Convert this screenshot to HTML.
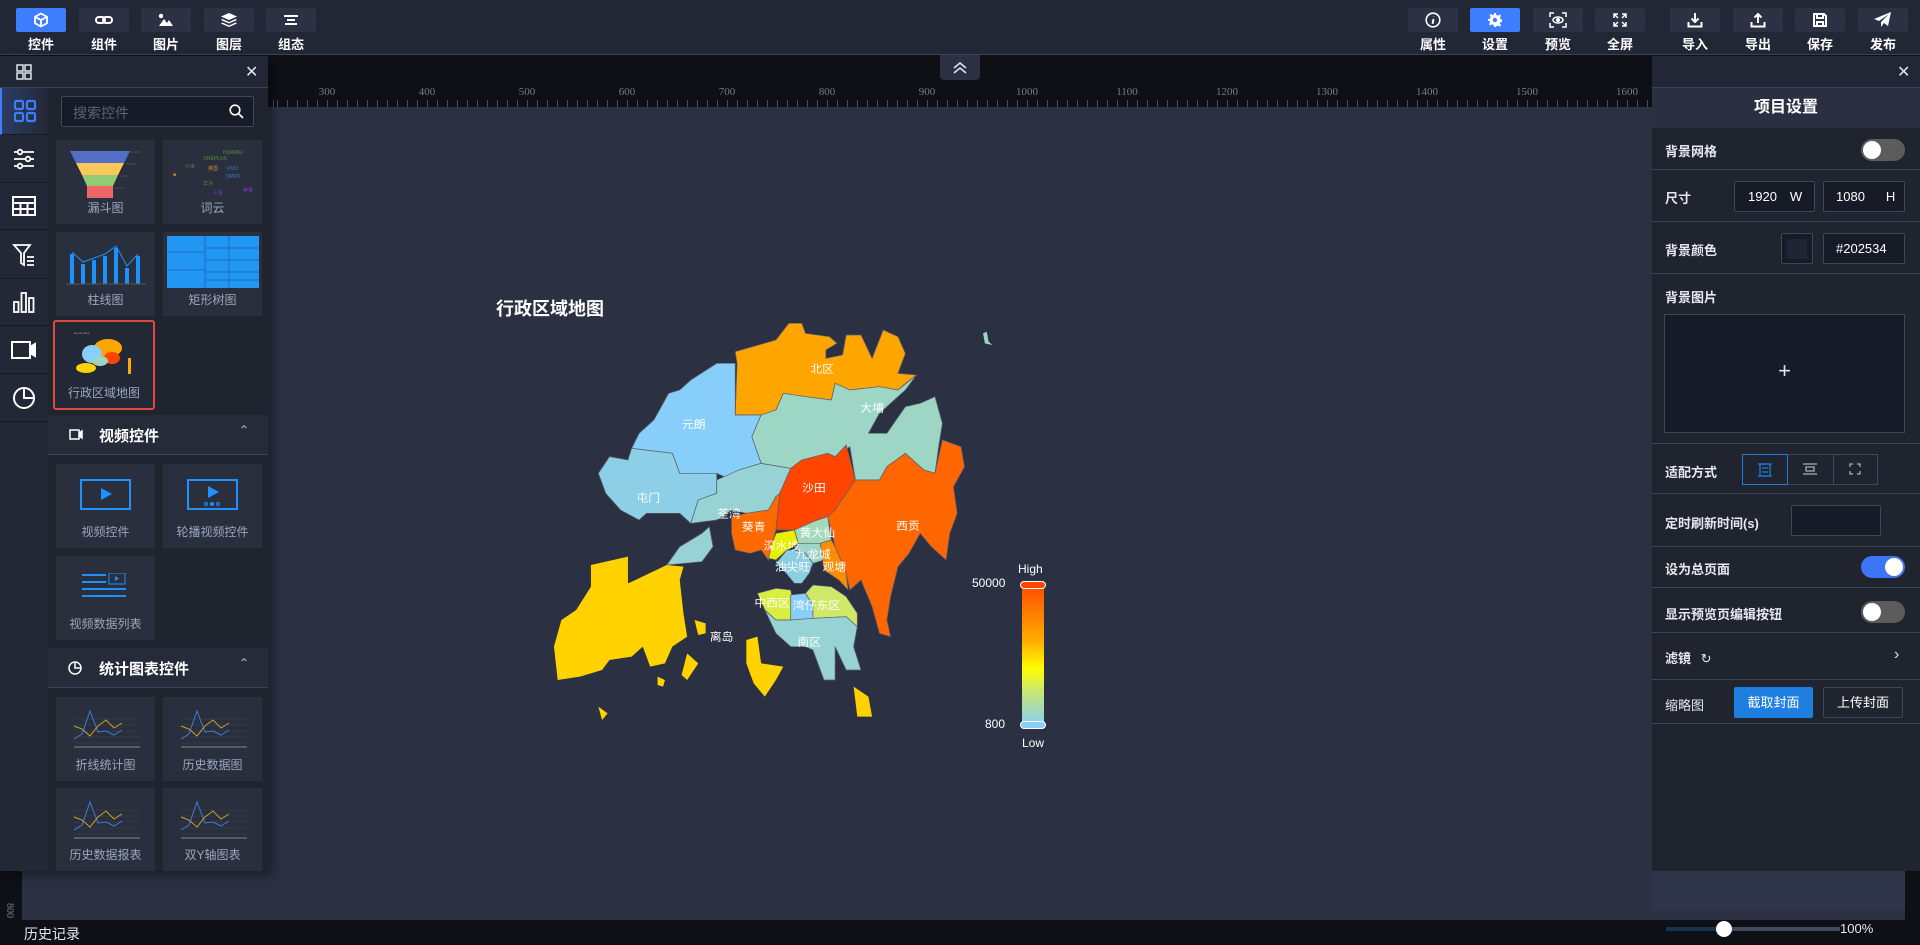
<!DOCTYPE html>
<html><head><meta charset="utf-8">
<style>
*{margin:0;padding:0;box-sizing:border-box}
body{width:1920px;height:945px;overflow:hidden;background:#0e1016;font-family:"Liberation Sans","Noto Sans CJK SC",sans-serif;position:relative;color:#fff}
.a{position:absolute}
.tb{position:absolute;top:8px;width:50px;height:24px;background:#2c3244;border-radius:2px;display:flex;align-items:center;justify-content:center}
.tb.on{background:#3d7eff}
.tl{position:absolute;top:34px;width:50px;text-align:center;font-size:13px;font-weight:bold;color:#fff}
.ic{position:absolute;left:0;width:48px;height:47px;border-bottom:1px solid #171b25;display:flex;align-items:center;justify-content:center}
.card{position:absolute;width:99px;height:84px;background:#2a2f3d}
.card .lb{position:absolute;left:0;right:0;bottom:8px;text-align:center;font-size:12px;color:#9aa7bd}
.sec{position:absolute;left:48px;width:220px;height:40px;background:#262b39;border-bottom:1px solid #3b4358;font-size:15px;font-weight:bold;color:#fff}
.row{position:absolute;left:1652px;width:268px;border-bottom:1px solid #394257}
.rl{position:absolute;left:13px;font-size:13px;font-weight:bold;color:#e6e8ee}
.inp{position:absolute;height:31px;border:1px solid #3d465b;background:#161b27;border-radius:2px;font-size:13px;color:#fff;display:flex;align-items:center}
.tg{position:absolute;left:209px;width:44px;height:22px;border-radius:11px;background:#5c5c5c}
.tg i{position:absolute;top:2px;width:18px;height:18px;border-radius:50%;background:#fff}
.rk{position:absolute;top:86px;font-family:"Liberation Serif",serif;font-size:11px;color:#777c88;transform:translateX(-50%)}
</style></head><body>

<!-- top bar -->
<div class="a" style="left:0;top:0;width:1920px;height:55px;background:#222736;border-bottom:1px solid #3a4257"></div>
<div class="tb on" style="left:16px"><svg width="16" height="16" viewBox="0 0 16 16" fill="none" stroke="#fff" stroke-width="1.8"><path d="M8 1.5 14 4.8v6.4L8 14.5 2 11.2V4.8z M2 4.8 8 8l6-3.2 M8 8v6.5"/></svg></div><div class="tl" style="left:16px">控件</div>
<div class="tb" style="left:79px"><svg width="18" height="12" viewBox="0 0 18 12" fill="none" stroke="#fff" stroke-width="2"><rect x="1" y="3" width="9" height="6" rx="3"/><rect x="8" y="3" width="9" height="6" rx="3"/></svg></div><div class="tl" style="left:79px">组件</div>
<div class="tb" style="left:141px"><svg width="16" height="14" viewBox="0 0 16 14" fill="#fff"><circle cx="3" cy="3" r="2.2"/><path d="M1 13 6 6l3 4 2-3 4 6z"/></svg></div><div class="tl" style="left:141px">图片</div>
<div class="tb" style="left:204px"><svg width="16" height="14" viewBox="0 0 16 14" fill="#fff"><path d="M8 0 16 3.5 8 7 0 3.5z"/><path d="M1.5 6 8 9l6.5-3L16 7 8 10.5 0 7z"/><path d="M1.5 9.5 8 12.5l6.5-3L16 10.5 8 14 0 10.5z"/></svg></div><div class="tl" style="left:204px">图层</div>
<div class="tb" style="left:266px"><svg width="14" height="10" viewBox="0 0 14 10" fill="#fff"><rect x="0" y="0" width="14" height="2"/><rect x="3" y="4" width="8" height="2"/><rect x="1" y="8" width="12" height="2"/></svg></div><div class="tl" style="left:266px">组态</div>

<div class="tb" style="left:1408px"><svg width="16" height="16" viewBox="0 0 16 16" fill="none" stroke="#fff" stroke-width="1.6"><circle cx="8" cy="8" r="6.8"/><path d="M8.5 7 7.6 11.8M8.8 4.2v.3" stroke-width="2"/></svg></div><div class="tl" style="left:1408px">属性</div>
<div class="tb on" style="left:1470px"><svg width="14" height="14" viewBox="0 0 14 14" fill="#fff"><path d="M6 0h2l.4 2 1.6.7 1.7-1.2 1.4 1.4-1.2 1.7.7 1.6 2 .4v2l-2 .4-.7 1.6 1.2 1.7-1.4 1.4-1.7-1.2-1.6.7L8 14H6l-.4-2-1.6-.7-1.7 1.2-1.4-1.4 1.2-1.7-.7-1.6L0 8V6l2-.4.7-1.6L1.5 2.3 2.9.9l1.7 1.2L6 1.6z"/><circle cx="7" cy="7" r="2.2" fill="#3d7eff"/></svg></div><div class="tl" style="left:1470px">设置</div>
<div class="tb" style="left:1533px"><svg width="18" height="16" viewBox="0 0 18 16" fill="none" stroke="#fff" stroke-width="1.5"><path d="M1 5V1h4M13 1h4v4M17 11v4h-4M5 15H1v-4"/><ellipse cx="9" cy="8" rx="5" ry="3"/><circle cx="9" cy="8" r="1.3" fill="#fff"/></svg></div><div class="tl" style="left:1533px">预览</div>
<div class="tb" style="left:1595px"><svg width="14" height="14" viewBox="0 0 14 14" fill="none" stroke="#fff" stroke-width="1.5"><path d="M1 5V1h4M1 1l4 4M13 5V1H9M13 1 9 5M1 9v4h4M1 13l4-4M13 9v4H9M13 13 9 9"/></svg></div><div class="tl" style="left:1595px">全屏</div>
<div class="tb" style="left:1670px"><svg width="16" height="16" viewBox="0 0 16 16" fill="none" stroke="#fff" stroke-width="2"><path d="M8 1v9M4.5 6.5 8 10l3.5-3.5M1.5 10v4.5h13V10"/></svg></div><div class="tl" style="left:1670px">导入</div>
<div class="tb" style="left:1733px"><svg width="16" height="16" viewBox="0 0 16 16" fill="none" stroke="#fff" stroke-width="2"><path d="M8 11V2M4.5 5.5 8 2l3.5 3.5M1.5 10v4.5h13V10"/></svg></div><div class="tl" style="left:1733px">导出</div>
<div class="tb" style="left:1795px"><svg width="14" height="14" viewBox="0 0 14 14" fill="none" stroke="#fff" stroke-width="2"><path d="M1 1h10l2 2v10H1z"/><path d="M4 1v4h6V1M4 13V9h6v4"/></svg></div><div class="tl" style="left:1795px">保存</div>
<div class="tb" style="left:1858px"><svg width="18" height="16" viewBox="0 0 18 16" fill="#fff"><path d="M17 0 0 7l5 2 10-7-8 8v5l3-4 4 3z"/></svg></div><div class="tl" style="left:1858px">发布</div>

<!-- canvas + rulers -->
<div class="a" style="left:22px;top:85px;width:1883px;height:835px;background:#2b3142"></div>
<div class="a" style="left:1652px;top:871px;width:253px;height:39px;background:#2e3548"></div>
<div class="a" style="left:22px;top:56px;width:1630px;height:51px;background:#0e1016"></div>
<div class="a" style="left:268px;top:100px;width:1384px;height:7px;background:repeating-linear-gradient(90deg,#474d5b 0 1px,transparent 1px 10px);background-position:9px 0"></div>
<div class="a" style="left:940px;top:55px;width:40px;height:25px;background:#2b3142;border-radius:0 0 4px 4px"><svg width="40" height="25" viewBox="0 0 40 25" fill="none" stroke="#dfe3ea" stroke-width="1.6"><path d="M14 13l6-5 6 5M14 18l6-5 6 5"/></svg></div>
<div class="rk" style="left:327px">300</div><div class="rk" style="left:427px">400</div><div class="rk" style="left:527px">500</div><div class="rk" style="left:627px">600</div><div class="rk" style="left:727px">700</div><div class="rk" style="left:827px">800</div><div class="rk" style="left:927px">900</div><div class="rk" style="left:1027px">1000</div><div class="rk" style="left:1127px">1100</div><div class="rk" style="left:1227px">1200</div><div class="rk" style="left:1327px">1300</div><div class="rk" style="left:1427px">1400</div><div class="rk" style="left:1527px">1500</div><div class="rk" style="left:1627px">1600</div>
<div class="a" style="left:0;top:871px;width:22px;height:50px;background:#0e1016"></div>
<div class="a" style="left:2px;top:905px;font-family:'Liberation Serif',serif;font-size:10px;color:#777c88;transform:rotate(90deg)">800</div>
<div class="a" style="left:0;top:920px;width:1920px;height:25px;background:#0e1016"></div>
<div class="a" style="left:24px;top:924px;font-size:14px;color:#e6e8ee">历史记录</div>
<div class="a" style="left:1666px;top:927px;width:174px;height:4px;background:#3f4a60"></div>
<div class="a" style="left:1666px;top:927px;width:58px;height:4px;background:#17334f"></div>
<div class="a" style="left:1716px;top:921px;width:16px;height:16px;border-radius:50%;background:#fff"></div>
<div class="a" style="left:1840px;top:921px;font-size:13px;color:#e6e8ee">100%</div>

<!-- map -->
<div class="a" style="left:496px;top:295px;font-size:18px;font-weight:bold;color:#fff">行政区域地图</div>
<svg class="a" style="left:480px;top:280px" width="580" height="470" viewBox="0 0 1568 1410" preserveAspectRatio="none">
<g stroke="#5a5f6c" stroke-width="2">
<path fill="#ffa500" d="M690 215 800 180 835 130 870 130 880 160 945 170 965 190 935 210 935 235 980 225 990 165 1030 165 1060 235 1090 150 1130 170 1150 220 1130 280 1180 285 1150 310 1130 330 1080 320 1000 330 960 310 950 360 880 350 820 340 800 390 760 405 690 405 695 250z"/>
<path fill="#87cefa" d="M690 250 690 405 760 405 735 470 760 550 700 570 670 595 640 580 540 580 520 520 410 505 430 460 470 420 510 340 540 330 570 300 640 250z"/>
<path fill="#8dcfe6" d="M410 505 520 520 540 580 640 580 640 640 590 660 570 730 540 700 450 700 430 720 380 690 340 640 320 580 350 530 400 540z"/>
<path fill="#97d2d4" d="M570 730 590 660 640 640 640 600 700 570 760 550 840 565 840 640 800 650 780 690 720 700 680 690 640 720z"/>
<path fill="#97d2d4" d="M505 855 540 800 600 760 620 740 630 800 600 845z"/>
<path fill="#9dd6c5" d="M760 405 800 390 820 340 880 350 950 360 960 310 1000 330 1080 320 1130 330 1180 285 1150 330 1080 400 1050 460 1100 460 1150 380 1190 370 1230 350 1250 430 1240 500 1230 580 1200 570 1150 520 1100 560 1080 600 1015 600 1000 500 960 530 940 520 870 540 840 565 760 550 735 470z"/>
<path fill="#ff4500" d="M840 565 870 540 940 520 960 530 990 495 1015 600 990 640 960 690 940 710 900 725 850 750 800 750 810 640z"/>
<path fill="#ff6600" d="M1015 600 1080 600 1100 560 1150 520 1200 570 1230 580 1250 480 1300 500 1310 560 1280 620 1290 700 1270 760 1260 840 1220 800 1190 760 1160 820 1130 860 1110 950 1100 1020 1110 1070 1080 1060 1060 980 1030 900 1000 930 990 880 960 800 940 710 960 690 990 640z"/>
<path fill="#ff6a00" d="M680 710 720 700 780 690 800 650 810 640 800 750 790 790 780 840 760 810 730 820 690 810 680 760z"/>
<path fill="#a5d8b8" d="M850 750 900 725 940 710 950 780 920 790 860 790z"/>
<path fill="#e8f000" d="M790 790 800 760 850 750 860 790 830 810 800 840 780 835z"/>
<path fill="#a0d4c8" d="M860 790 920 790 930 840 900 850 880 820 850 810z"/>
<path fill="#ff8c00" d="M920 790 950 780 960 800 990 880 995 930 970 900 930 870z"/>
<path fill="#8ccfe4" d="M830 810 850 810 880 820 900 850 890 880 870 910 850 910 820 870 800 850z"/>
<path fill="#d8ee40" d="M750 940 800 925 840 930 850 990 840 1020 800 1020 770 990z"/>
<path fill="#87cefa" d="M840 945 880 940 900 975 900 1015 860 1025 840 1020z"/>
<path fill="#d0e868" d="M880 940 900 915 950 920 990 950 1020 1000 1020 1040 990 1010 900 1015 900 975z"/>
<path fill="#97d2d4" d="M770 990 800 1020 840 1020 900 1015 990 1010 1020 1040 1010 1100 1030 1170 990 1170 960 1100 960 1200 930 1200 900 1110 880 1100 840 1100 800 1060z"/>
<g fill="#ffd200" stroke="none">
<path d="M300 855 400 830 400 910 420 900 505 855 550 860 540 900 550 1000 560 1070 520 1100 500 1150 460 1160 440 1100 410 1130 350 1140 330 1170 270 1190 210 1200 200 1100 220 1020 260 990 300 920z"/>
<path d="M720 1080 750 1070 760 1150 820 1160 800 1200 770 1250 740 1210 720 1150z"/>
<path d="M1010 1220 1050 1250 1060 1310 1020 1310z"/>
<path d="M320 1280 345 1300 330 1320z"/>
<path d="M560 1120 590 1150 560 1200 545 1185z"/>
<path d="M580 1020 610 1030 610 1060 590 1065z"/>
<path d="M480 1190 500 1200 495 1220 480 1215z"/>
</g>
<path fill="#9dd6c5" stroke="none" d="M1360 160 1370 155 1375 185 1385 195 1365 190z"/>
</g>
<g fill="#fff" font-size="32" text-anchor="middle" font-family="Liberation Sans,Noto Sans CJK SC,sans-serif">
<text x="925" y="277">北区</text><text x="578" y="444">元朗</text><text x="1060" y="394">大埔</text><text x="455" y="664">屯门</text><text x="903" y="634">沙田</text><text x="673" y="712">荃湾</text><text x="740" y="752">葵青</text><text x="1157" y="749">西贡</text><text x="912" y="769">黄大仙</text><text x="815" y="809">深水埗</text><text x="900" y="834">九龙城</text><text x="958" y="872">观塘</text><text x="845" y="872">油尖旺</text><text x="790" y="980">中西区</text><text x="910" y="987">湾仔东区</text><text x="653" y="1082">离岛</text><text x="890" y="1097">南区</text>
</g>
</svg>
<div class="a" style="left:1018px;top:562px;font-size:12px;color:#fff">High</div>
<div class="a" style="left:972px;top:576px;font-size:12px;color:#fff">50000</div>
<div class="a" style="left:985px;top:717px;font-size:12px;color:#fff">800</div>
<div class="a" style="left:1022px;top:736px;font-size:12px;color:#fff">Low</div>
<div class="a" style="left:1022px;top:582px;width:22px;height:145px;border-radius:4px;background:linear-gradient(#ff4500,#ff7a00 20%,#ffaa00 40%,#ffff00 60%,#c8e870 75%,#87cefa)"></div>
<div class="a" style="left:1020px;top:581px;width:26px;height:8px;border-radius:4px;background:#ff4500;border:1.5px solid #fff"></div>
<div class="a" style="left:1020px;top:721px;width:26px;height:8px;border-radius:4px;background:#87cefa;border:1.5px solid #fff"></div>

<!-- left panel -->
<div class="a" style="left:0;top:56px;width:268px;height:815px;background:#20242f;box-shadow:4px 4px 10px rgba(0,0,0,.4)"></div>
<div class="a" style="left:0;top:56px;width:268px;height:32px;background:#222736;border-bottom:1px solid #394257"></div>
<svg class="a" style="left:16px;top:64px" width="16" height="16" viewBox="0 0 16 16" fill="none" stroke="#dfe3ea" stroke-width="1.5"><rect x="1" y="1" width="6" height="6"/><rect x="9" y="1" width="6" height="6"/><rect x="1" y="9" width="6" height="6"/><rect x="9" y="9" width="6" height="6"/></svg>
<div class="a" style="left:245px;top:62px;font-size:16px;color:#dfe3ea">✕</div>
<div class="a" style="left:0;top:88px;width:48px;height:783px;background:#232836"></div>
<div class="ic" style="top:88px;border-left:2px solid #3d7eff;background:linear-gradient(90deg,#2c3c63,#232836)"><svg width="24" height="24" viewBox="0 0 24 24" fill="none" stroke="#3d7eff" stroke-width="2.2"><rect x="2" y="2" width="8" height="8" rx="1.5"/><rect x="14" y="2" width="8" height="8" rx="1.5"/><rect x="2" y="14" width="8" height="8" rx="1.5"/><rect x="14" y="14" width="8" height="8" rx="1.5"/></svg></div>
<div class="ic" style="top:136px"><svg width="22" height="22" viewBox="0 0 22 22" fill="none" stroke="#fff" stroke-width="1.8"><path d="M1 4h20M1 11h20M1 18h20"/><circle cx="7" cy="4" r="2.3" fill="#232836"/><circle cx="15" cy="11" r="2.3" fill="#232836"/><circle cx="7" cy="18" r="2.3" fill="#232836"/></svg></div>
<div class="ic" style="top:183px"><svg width="24" height="20" viewBox="0 0 24 20" fill="none" stroke="#fff" stroke-width="2"><rect x="1" y="1" width="22" height="18"/><path d="M1 7h22M1 13h22M8.5 7v12M15.5 7v12"/></svg></div>
<div class="ic" style="top:232px"><svg width="24" height="24" viewBox="0 0 24 24" fill="none" stroke="#fff" stroke-width="1.8"><path d="M2 2h16l-6 8v12l-3-2V10z"/><path d="M15 14h7M15 18h7M15 22h7" stroke="#fff"/></svg></div>
<div class="ic" style="top:279px"><svg width="22" height="22" viewBox="0 0 22 22" fill="none" stroke="#fff" stroke-width="1.8"><rect x="1" y="11" width="4.5" height="10"/><rect x="8.5" y="2" width="4.5" height="19"/><rect x="16" y="7" width="4.5" height="14"/></svg></div>
<div class="ic" style="top:327px"><svg width="26" height="18" viewBox="0 0 26 18" fill="none" stroke="#fff" stroke-width="2"><rect x="1" y="1" width="18" height="16"/><path d="M19 6l5-3v12l-5-3" fill="#fff"/></svg></div>
<div class="ic" style="top:375px"><svg width="24" height="24" viewBox="0 0 24 24" fill="none" stroke="#fff" stroke-width="2"><circle cx="12" cy="12" r="10"/><path d="M12 2v10h10"/></svg></div>

<div class="a" style="left:61px;top:96px;width:193px;height:31px;border:1px solid #3d465b;background:#161b27;border-radius:2px"></div>
<div class="a" style="left:73px;top:103px;font-size:14px;color:#5a6274">搜索控件</div>
<svg class="a" style="left:229px;top:104px" width="15" height="15" viewBox="0 0 15 15" fill="none" stroke="#fff" stroke-width="1.6"><circle cx="6" cy="6" r="4.8"/><path d="M9.5 9.5 14 14"/></svg>

<div class="card" style="left:56px;top:140px"><svg class="a" style="left:4px;top:0" width="91" height="58"><path d="M10 11h60l-6 12H16z" fill="#5470c6"/><path d="M16 23h48l-6 12H22z" fill="#fac858"/><path d="M22 35h36l-5 11H27z" fill="#91cc75"/><path d="M27 46h26v12H27z" fill="#ee6666"/><path d="M70 12h10M66 24h10M60 36h10M54 48h10" stroke="#666" stroke-width=".5"/></svg><div class="lb">漏斗图</div></div>
<div class="card" style="left:163px;top:140px"><svg class="a" style="left:0;top:0" width="99" height="58" font-size="5"><text x="40" y="20" fill="#5a8a3a">ONEPLUS</text><text x="60" y="14" fill="#5a8a3a">HUAWEI</text><text x="63" y="30" fill="#3b7dd8">VIVO</text><text x="63" y="38" fill="#3b7dd8">OPPO</text><text x="45" y="30" fill="#c98a2a">英国</text><text x="10" y="36" fill="#c98a2a">■</text><text x="22" y="28" fill="#5a8a3a">小米</text><text x="40" y="45" fill="#5a8a3a">华为</text><text x="50" y="54" fill="#8a3ac9">三星</text><text x="80" y="52" fill="#8a3ac9">苹果</text></svg><div class="lb">词云</div></div>
<div class="card" style="left:56px;top:232px"><svg class="a" style="left:8px;top:6px" width="85" height="48"><g fill="#1e90ff"><rect x="6" y="16" width="4" height="30"/><rect x="17" y="26" width="4" height="20"/><rect x="28" y="22" width="4" height="24"/><rect x="39" y="18" width="4" height="28"/><rect x="50" y="10" width="4" height="36"/><rect x="61" y="30" width="4" height="16"/><rect x="72" y="18" width="4" height="28"/></g><path d="M8 14 19 24 30 20 41 16 52 8 63 28 74 16" fill="none" stroke="#1e90ff"/><path d="M2 46h80" stroke="#555"/></svg><div class="lb">柱线图</div></div>
<div class="card" style="left:163px;top:232px"><svg class="a" style="left:4px;top:4px" width="92" height="52"><rect width="92" height="52" fill="#2196f3"/><g stroke="#1a6fc0" stroke-width="1"><path d="M38 0v52M0 16h38M0 34h38M38 12h54M38 24h54M38 36h54M38 44h54M62 0v52"/></g></svg><div class="lb">矩形树图</div></div>
<div class="a" style="left:53px;top:320px;width:102px;height:90px;border:2px solid #e04a3c;border-radius:3px;background:#232836"></div>
<svg class="a" style="left:70px;top:328px" width="70" height="50"><text x="4" y="6" font-size="3" fill="#999">Henan Map</text><ellipse cx="38" cy="20" rx="14" ry="9" fill="#ffa500"/><ellipse cx="22" cy="26" rx="10" ry="9" fill="#87cefa"/><ellipse cx="42" cy="30" rx="8" ry="6" fill="#ff4500"/><ellipse cx="30" cy="33" rx="8" ry="5" fill="#9dd6c5"/><ellipse cx="16" cy="40" rx="10" ry="5" fill="#ffd200"/><rect x="58" y="30" width="3" height="16" fill="#ffaa00"/></svg>
<div class="a" style="left:53px;top:384px;width:102px;text-align:center;font-size:12px;color:#9aa7bd">行政区域地图</div>

<div class="sec" style="top:415px"><svg class="a" style="left:21px;top:14px" width="14" height="11" viewBox="0 0 14 11" fill="none" stroke="#fff" stroke-width="1.5"><rect x="1" y="1" width="9" height="9"/><path d="M10 4l3-2v7l-3-2" fill="#fff"/></svg><span class="a" style="left:51px;top:10px">视频控件</span><span class="a" style="left:191px;top:8px;font-size:12px;color:#8892a6">⌃</span></div>
<div class="card" style="left:56px;top:464px"><svg class="a" style="left:24px;top:15px" width="51" height="31"><rect x="1" y="1" width="49" height="29" fill="none" stroke="#1e90ff" stroke-width="2"/><path d="M21 9l11 6-11 6z" fill="#1e90ff"/></svg><div class="lb">视频控件</div></div>
<div class="card" style="left:163px;top:464px"><svg class="a" style="left:24px;top:15px" width="51" height="31"><rect x="1" y="1" width="49" height="29" fill="none" stroke="#1e90ff" stroke-width="2"/><path d="M21 7l11 6-11 6z" fill="#1e90ff"/><g fill="none" stroke="#1e90ff"><circle cx="19" cy="25" r="1.5"/><circle cx="25" cy="25" r="1.5" fill="#1e90ff"/><circle cx="31" cy="25" r="1.5"/></g></svg><div class="lb">轮播视频控件</div></div>
<div class="card" style="left:56px;top:556px"><svg class="a" style="left:26px;top:17px" width="46" height="26"><g fill="#1e90ff"><rect x="0" y="1" width="24" height="2"/><rect x="0" y="8" width="24" height="2"/><rect x="0" y="15" width="44" height="2"/><rect x="0" y="22" width="44" height="2"/></g><rect x="27" y="0" width="16" height="11" fill="none" stroke="#1e90ff"/><path d="M33 3l4 2.5-4 2.5z" fill="#1e90ff"/></svg><div class="lb">视频数据列表</div></div>

<div class="sec" style="top:648px"><svg class="a" style="left:20px;top:13px" width="14" height="14" viewBox="0 0 14 14" fill="none" stroke="#fff" stroke-width="1.5"><circle cx="7" cy="7" r="6"/><path d="M7 1v6h6"/></svg><span class="a" style="left:51px;top:10px">统计图表控件</span><span class="a" style="left:191px;top:8px;font-size:12px;color:#8892a6">⌃</span></div>
<svg width="0" height="0" style="position:absolute"><defs><g id="lc"><path d="M8 12h66M8 18h66M8 24h66M8 30h66M8 36h66" stroke="#3c4252" stroke-width=".6"/><rect x="8" y="39" width="66" height="2" fill="#555b68"/><polyline points="8,32 16,27 24,4 32,25 40,24 48,28 56,23" fill="none" stroke="#3b7dd8" stroke-width="1"/><polyline points="8,19 16,22 24,29 32,19 40,13 48,21 56,16" fill="none" stroke="#c9a227" stroke-width="1"/></g></defs></svg>
<div class="card" style="left:56px;top:697px"><svg class="a" style="left:10px;top:10px" width="80" height="45"><use href="#lc"/></svg><div class="lb">折线统计图</div></div>
<div class="card" style="left:163px;top:697px"><svg class="a" style="left:10px;top:10px" width="80" height="45"><use href="#lc"/></svg><div class="lb">历史数据图</div></div>
<div class="card" style="left:56px;top:788px;height:83px"><svg class="a" style="left:10px;top:10px" width="80" height="45"><use href="#lc"/></svg><div class="lb">历史数据报表</div></div>
<div class="card" style="left:163px;top:788px;height:83px"><svg class="a" style="left:10px;top:10px" width="80" height="45"><use href="#lc"/></svg><div class="lb">双Y轴图表</div></div>

<!-- right panel -->
<div class="a" style="left:1652px;top:56px;width:268px;height:815px;background:#20242f"></div>
<div class="a" style="left:1652px;top:56px;width:268px;height:32px;background:#222736;border-bottom:1px solid #394257"></div>
<div class="a" style="left:1897px;top:62px;font-size:16px;color:#dfe3ea">✕</div>
<div class="a" style="left:1652px;top:88px;width:268px;height:40px;background:#2a3042;text-align:center;line-height:40px;font-size:16px;font-weight:bold">项目设置</div>
<div class="row" style="top:128px;height:42px"><span class="rl" style="top:13px">背景网格</span><div class="tg" style="top:11px"><i style="left:2px"></i></div></div>
<div class="row" style="top:170px;height:52px"><span class="rl" style="top:18px">尺寸</span>
<div class="inp" style="left:82px;top:11px;width:81px;padding-left:13px">1920<span style="margin-left:13px">W</span></div>
<div class="inp" style="left:171px;top:11px;width:82px;padding-left:12px">1080<span style="margin-left:21px">H</span></div></div>
<div class="row" style="top:222px;height:52px"><span class="rl" style="top:18px">背景颜色</span>
<div class="inp" style="left:129px;top:11px;width:32px;justify-content:center"><div style="width:20px;height:20px;background:#202534"></div></div>
<div class="inp" style="left:171px;top:11px;width:82px;padding-left:12px">#202534</div></div>
<div class="row" style="top:274px;height:170px"><span class="rl" style="top:13px">背景图片</span>
<div class="a" style="left:12px;top:40px;width:241px;height:119px;background:#161b27;border:1px solid #3d465b;text-align:center;line-height:112px;font-size:22px;font-weight:300;color:#dfe3ea">+</div></div>
<div class="row" style="top:444px;height:50px"><span class="rl" style="top:18px">适配方式</span>
<div class="a" style="left:90px;top:10px;width:136px;height:31px;border:1px solid #3d465b"></div>
<div class="a" style="left:90px;top:10px;width:46px;height:31px;border:1px solid #1e7ae0"><svg class="a" style="left:15px;top:8px" width="14" height="14" viewBox="0 0 14 14" fill="none" stroke="#1e7ae0" stroke-width="1.3"><rect x="2" y="1" width="10" height="12"/><path d="M0 1h14M0 13h14M4 5h6M4 9h6"/></svg></div>
<div class="a" style="left:181px;top:10px;width:1px;height:31px;background:#3d465b"></div>
<svg class="a" style="left:151px;top:19px" width="14" height="12" viewBox="0 0 14 12" fill="none" stroke="#aab" stroke-width="1.3"><path d="M0 1h14M0 11h14M3 4h8v4H3z"/></svg>
<svg class="a" style="left:197px;top:19px" width="12" height="12" viewBox="0 0 12 12" fill="none" stroke="#aab" stroke-width="1.3"><path d="M1 4V1h3M8 1h3v3M11 8v3H8M4 11H1V8"/></svg></div>
<div class="row" style="top:494px;height:53px"><span class="rl" style="top:19px">定时刷新时间(s)</span><div class="inp" style="left:139px;top:11px;width:90px"></div></div>
<div class="row" style="top:547px;height:41px"><span class="rl" style="top:12px">设为总页面</span><div class="tg" style="top:9px;background:#3d74f5"><i style="left:24px"></i></div></div>
<div class="row" style="top:588px;height:45px"><span class="rl" style="top:16px">显示预览页编辑按钮</span><div class="tg" style="top:13px"><i style="left:2px"></i></div></div>
<div class="row" style="top:633px;height:47px"><span class="rl" style="top:15px">滤镜 <span style="font-weight:normal;margin-left:6px">↻</span></span><span class="a" style="left:242px;top:13px;font-size:16px;color:#dfe3ea">›</span></div>
<div class="row" style="top:680px;height:44px"><span class="rl" style="top:15px;font-weight:normal">缩略图</span>
<div class="a" style="left:82px;top:7px;width:79px;height:31px;background:#1f7fe0;border-radius:2px;text-align:center;line-height:31px;font-size:13px">截取封面</div>
<div class="a" style="left:171px;top:7px;width:80px;height:31px;border:1px solid #3d465b;border-radius:2px;text-align:center;line-height:29px;font-size:13px">上传封面</div></div>
</body></html>
